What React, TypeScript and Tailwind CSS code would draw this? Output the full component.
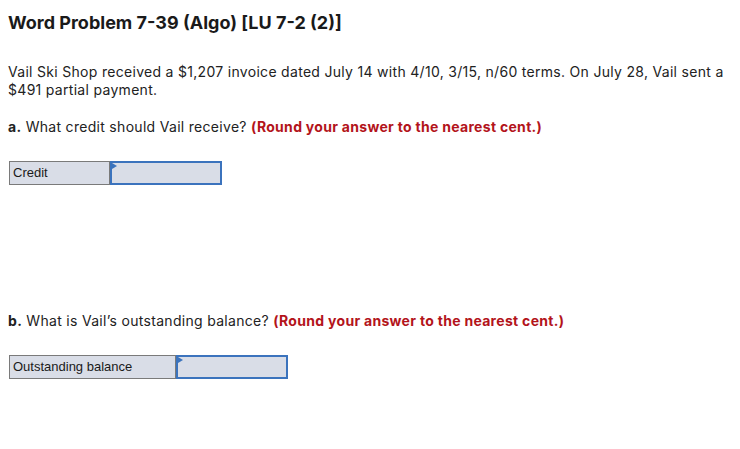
export default function App() {
  return (
    <div className="w-[740px] h-[449px] bg-white text-[#222] font-['Inter','Liberation_Sans',sans-serif] px-2 pt-[12px]">
      <h1 className="text-[18px] font-bold leading-[22px] text-[#1a1a1a]">Word Problem 7-39 (Algo) [LU 7-2 (2)]</h1>
      <p className="mt-[29px] text-[14px] leading-[18px] tracking-[0.3px]">
        Vail Ski Shop received a $1,207 invoice dated July 14 with 4/10, 3/15, n/60 terms. On July 28, Vail sent a $491 partial payment.
      </p>
      <p className="mt-[19px] text-[14px] leading-[18px] tracking-[0.3px]">
        <span className="font-bold">a.</span> What credit should Vail receive?{' '}
        <span className="font-bold text-[#b3141b]">(Round your answer to the nearest cent.)</span>
      </p>
      <AnswerRow label="Credit" labelWidth="w-[100px]" className="mt-[25px]" />
      <p className="mt-[127px] text-[14px] leading-[18px] tracking-[0.3px]">
        <span className="font-bold">b.</span> What is Vail’s outstanding balance?{' '}
        <span className="font-bold text-[#b3141b]">(Round your answer to the nearest cent.)</span>
      </p>
      <AnswerRow label="Outstanding balance" labelWidth="w-[166px]" className="mt-[25px]" />
    </div>
  );
}

function AnswerRow({ label, labelWidth, className }: { label: string; labelWidth: string; className: string }) {
  return (
    <div className={`flex ml-px w-fit h-[24px] border border-[#7a7a7a] bg-[#d9dde7] ${className}`}>
      <div className={`${labelWidth} border-r border-[#7a7a7a] px-[3px] flex items-center font-['Liberation_Sans',sans-serif] text-[13px] text-[#1a1a1a]`}>
        {label}
      </div>
      <div className="relative w-[112px] border-2 border-[#3b73bd] -my-px -mr-px">
        <span className="absolute left-0 top-0 w-0 h-0 border-l-[5px] border-l-[#3b73bd] border-y-[3px] border-y-transparent" />
      </div>
    </div>
  );
}
